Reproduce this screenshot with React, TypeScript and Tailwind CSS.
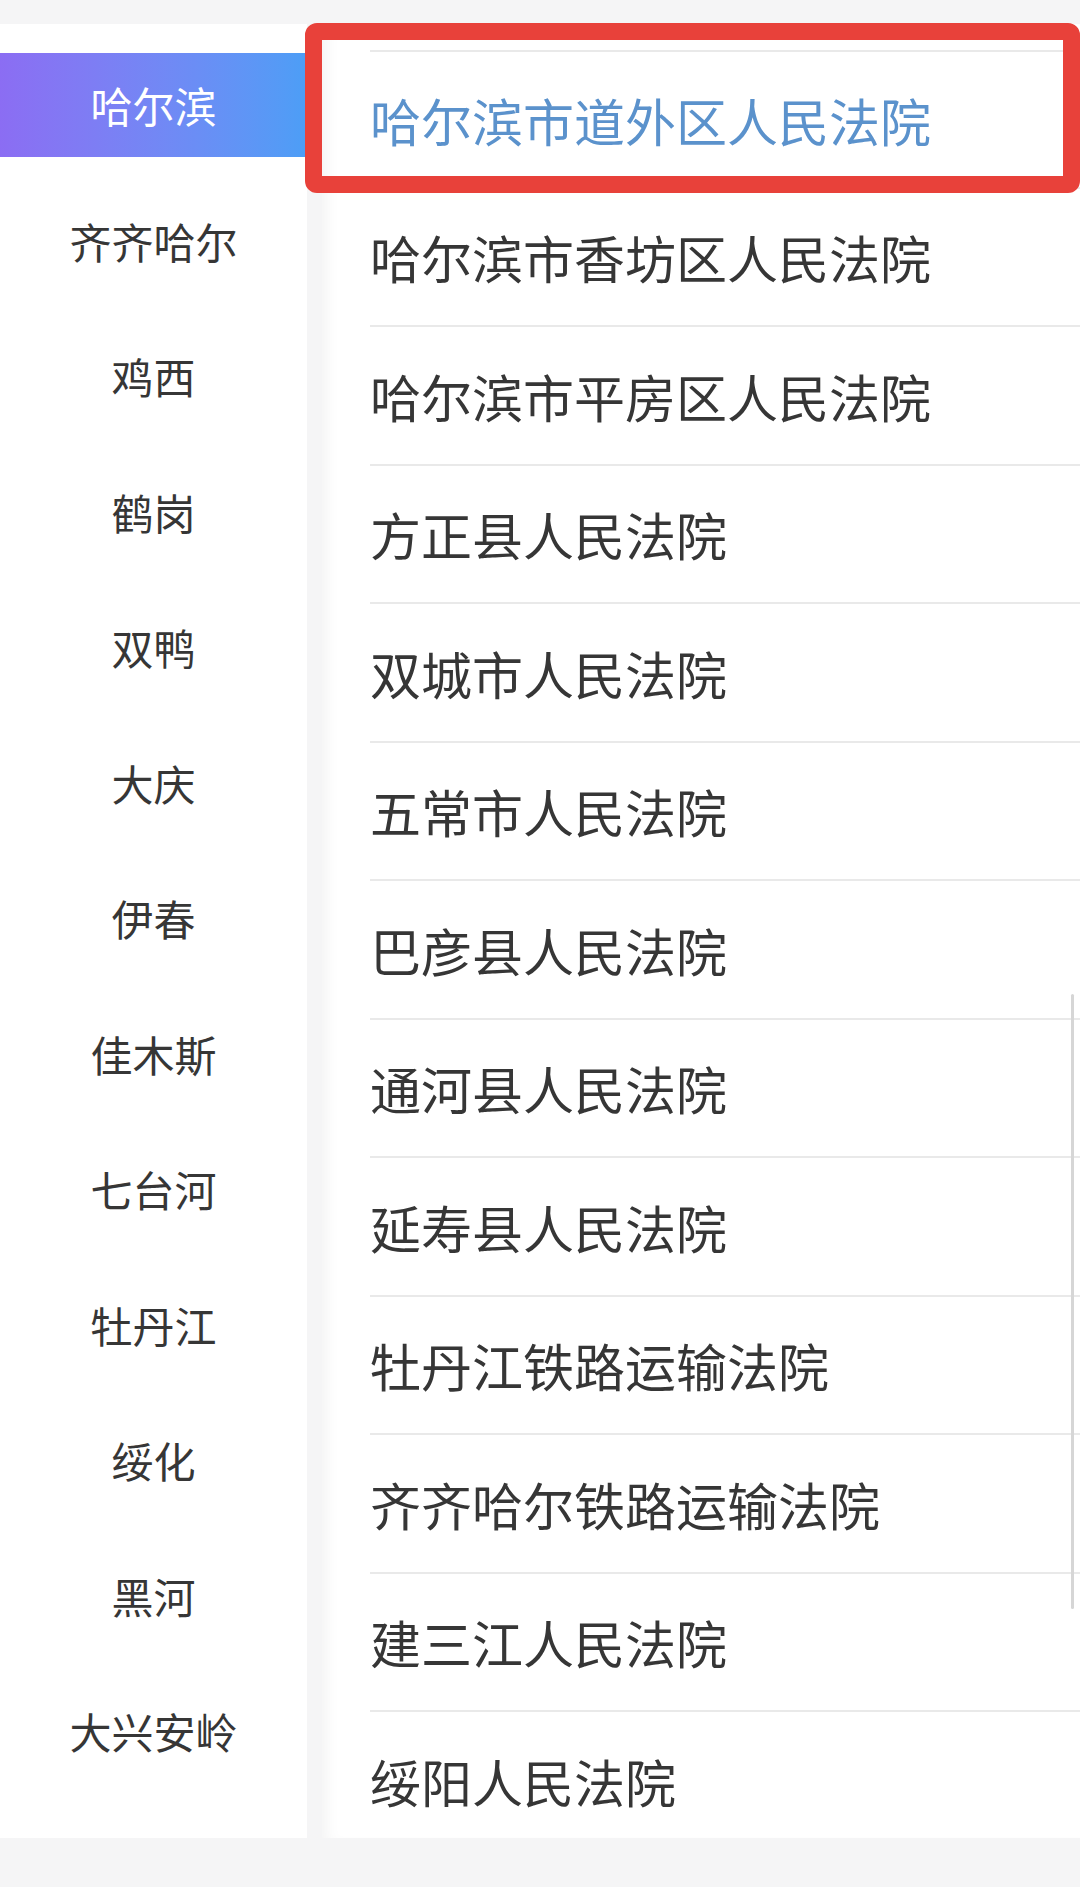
const cities = [
  '哈尔滨',
  '齐齐哈尔',
  '鸡西',
  '鹤岗',
  '双鸭',
  '大庆',
  '伊春',
  '佳木斯',
  '七台河',
  '牡丹江',
  '绥化',
  '黑河',
  '大兴安岭',
];

const courts = [
  '哈尔滨市道外区人民法院',
  '哈尔滨市香坊区人民法院',
  '哈尔滨市平房区人民法院',
  '方正县人民法院',
  '双城市人民法院',
  '五常市人民法院',
  '巴彦县人民法院',
  '通河县人民法院',
  '延寿县人民法院',
  '牡丹江铁路运输法院',
  '齐齐哈尔铁路运输法院',
  '建三江人民法院',
  '绥阳人民法院',
];

const font = { fontFamily: '"Noto Sans CJK SC", "Noto Sans", sans-serif' };

export default function App() {
  const activeCity = 0;
  const activeCourt = 0;

  return (
    <div
      className="relative flex h-[1887px] w-[1080px] flex-col overflow-hidden bg-[#f5f5f6]"
      style={font}
    >
      {/* top gap */}
      <div className="h-[24px] shrink-0" />

      <div className="flex h-[1814px] shrink-0">
        {/* City sidebar */}
        <div className="flex w-[307px] shrink-0 flex-col gap-[31.5px] bg-white pt-[29px]">
          {cities.map((city, i) => (
            <div
              key={city}
              className={`flex h-[104px] shrink-0 items-center justify-center text-[42px] leading-none ${
                i === activeCity
                  ? 'bg-gradient-to-r from-[#8b6df3] to-[#4c9ef6] text-white'
                  : 'text-[#363636]'
              }`}
            >
              {city}
            </div>
          ))}
        </div>

        {/* Court list */}
        <div className="ml-[15px] flex flex-1 flex-col overflow-hidden bg-white pt-[26px] pl-[48px] shadow-[inset_14px_0_16px_-10px_rgba(0,0,0,0.05)]">
          {courts.map((court, i) => (
            <div
              key={court}
              className={`flex h-[138.5px] shrink-0 items-center border-b-2 border-[#e9e9e9] pt-[2px] text-[51px] leading-none ${
                i === 0 ? 'border-t-2' : ''
              } ${i === activeCourt ? 'text-[#5b92cc]' : 'text-[#363636]'}`}
            >
              {court}
            </div>
          ))}
        </div>
      </div>

      {/* bottom gap */}
      <div className="flex-1" />

      {/* scrollbar */}
      <div className="absolute left-[1071px] top-[994px] h-[615px] w-[3px] rounded-full bg-[#d6d6d6]" />

      {/* highlight annotation */}
      <div className="absolute left-[305px] top-[23px] h-[170px] w-[775px] rounded-[12px] border-[17px] border-[#e8413a]" />
    </div>
  );
}
